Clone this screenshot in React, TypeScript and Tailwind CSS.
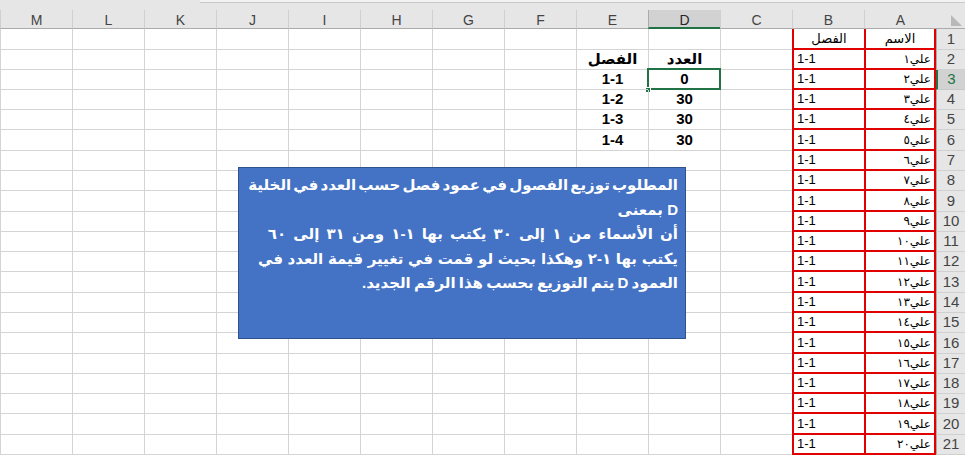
const COLS = ['A', 'B', 'C', 'D', 'E', 'F', 'G', 'H', 'I', 'J', 'K', 'L', 'M'];
const HEIGHTS = [21, 20, 20, 20, 20, 21, 20, 20, 21, 20, 20, 20, 21, 20, 20, 21, 20, 20, 20, 21, 20];

const toArabic = (n: number) => String(n).replace(/\d/g, (d) => '٠١٢٣٤٥٦٧٨٩'[Number(d)]);

// الجدول الصغير في العمودين D و E
const SUMMARY: Record<number, { e: string; d: string }> = {
  2: { e: 'الفصل', d: 'العدد' },
  3: { e: '1-1', d: '0' },
  4: { e: '1-2', d: '30' },
  5: { e: '1-3', d: '30' },
  6: { e: '1-4', d: '30' },
};

// كل سطر مع تباعد الكلمات الخاص به حتى يطابق عرض السطر الأصلي
const NOTE_LINES = [
  { text: 'المطلوب توزيع الفصول في عمود فصل حسب العدد في الخلية', cls: '[word-spacing:-2px]' },
  { text: 'D بمعنى', cls: '' },
  { text: 'أن الأسماء من ١ إلى ٣٠ يكتب بها ١-١  ومن ٣١ إلى ٦٠', cls: '[word-spacing:3px]' },
  { text: 'يكتب بها ١-٢ وهكذا بحيث لو قمت في تغيير قيمة العدد في', cls: '[word-spacing:0.5px]' },
  { text: 'العمود D يتم التوزيع بحسب هذا الرقم الجديد.', cls: '[word-spacing:-1px]' },
];

const FONT = "font-['Liberation_Sans','DejaVu_Sans',sans-serif]";

function HeaderRow() {
  return (
    <div className="flex flex-col">
      {/* حافة شريط الصيغة */}
      <div className="flex h-[10px] bg-[#e6e6e6]">
        <div className="w-[765px] shrink-0 h-[3px] bg-[#f3f3f3] border-b border-[#c8c8c8]" />
      </div>
      <div className="flex h-[19px]">
        <div className="w-[29px] shrink-0 bg-[#e6e6e6] border-b border-[#ababab] flex items-end justify-start pr-[3px] pb-[2px]">
          <svg width="11" height="11" viewBox="0 0 11 11">
            <polygon points="0,0 0,11 11,11" fill="#b9b9b9" />
          </svg>
        </div>
        {COLS.map((c) => (
          <div
            key={c}
            className={
              c === 'D'
                ? 'w-[72px] shrink-0 bg-[#d2d2d2] border-l border-[#ababab] border-b-2 border-b-[#217346] flex items-center justify-center text-[14px] text-[#262626] pt-[3px]'
                : 'w-[72px] shrink-0 bg-[#e6e6e6] border-l border-[#d0d0d0] border-b border-b-[#ababab] flex items-center justify-center text-[14px] text-[#444] pt-[3px]'
            }
          >
            {c}
          </div>
        ))}
      </div>
    </div>
  );
}

function Cell({ col, row }: { col: string; row: number }) {
  if (col === 'A') {
    return (
      <div className="w-[72px] shrink-0 border-l-2 border-r-2 border-b-2 border-[#e00000] flex items-center px-[3px] bg-white">
        {row === 1 ? (
          <span className="w-full text-center text-[13px]">الاسم</span>
        ) : (
          <span className="w-full text-right text-[12px] font-['DejaVu_Sans',sans-serif]">
            {'علي' + toArabic(row - 1)}
          </span>
        )}
      </div>
    );
  }
  if (col === 'B') {
    return (
      <div className="w-[72px] shrink-0 border-l-2 border-b-2 border-[#e00000] flex items-center px-[3px] bg-white">
        {row === 1 ? (
          <span className="w-full text-center text-[13px]">الفصل</span>
        ) : (
          <span className="w-full text-left text-[13px]" dir="ltr">
            1-1
          </span>
        )}
      </div>
    );
  }
  const s = SUMMARY[row];
  const value = s ? (col === 'D' ? s.d : col === 'E' ? s.e : '') : '';
  const selected = col === 'D' && row === 3;
  return (
    <div className="relative w-[72px] shrink-0 border-l border-b border-[#d4d4d4] flex items-center justify-center font-bold text-[15px]">
      {value}
      {selected && (
        <>
          <div className="absolute -left-[2px] -top-[2px] -right-[1px] -bottom-[1px] border-2 border-[#217346]" />
          <div className="absolute -left-[4px] -bottom-[4px] w-[6px] h-[6px] bg-[#217346] border border-white" />
        </>
      )}
    </div>
  );
}

function SheetRow({ row, height }: { row: number; height: number }) {
  const active = row === 3;
  return (
    <div className={height === 21 ? 'flex h-[21px]' : 'flex h-[20px]'}>
      <div
        className={
          active
            ? 'w-[29px] shrink-0 bg-[#d2d2d2] border-l-2 border-[#217346] border-b border-b-[#c8c8c8] flex items-center justify-center text-[15px] text-[#217346]'
            : 'w-[29px] shrink-0 bg-[#e6e6e6] border-l border-[#ababab] border-b border-b-[#d0d0d0] flex items-center justify-center text-[15px] text-[#444]'
        }
      >
        {row}
      </div>
      {COLS.map((c) => (
        <Cell key={c} col={c} row={row} />
      ))}
    </div>
  );
}

export default function App() {
  return (
    <div className={`relative w-[965px] h-[455px] overflow-hidden bg-white text-black ${FONT}`}>
      <div dir="rtl" className="flex flex-col">
        <HeaderRow />
        {HEIGHTS.map((h, i) => (
          <SheetRow key={i} row={i + 1} height={h} />
        ))}
      </div>

      {/* مربع النص */}
      <div
        dir="rtl"
        className="absolute left-[238px] top-[167px] w-[448px] h-[172px] bg-[#4472c4] border border-[#2f528f] pr-[7px] pt-[5px] text-white font-bold text-[15px] leading-[24.5px]"
      >
        {NOTE_LINES.map((line, i) => (
          <div key={i} className={`whitespace-nowrap text-right ${line.cls}`}>
            {line.text}
          </div>
        ))}
      </div>
    </div>
  );
}
